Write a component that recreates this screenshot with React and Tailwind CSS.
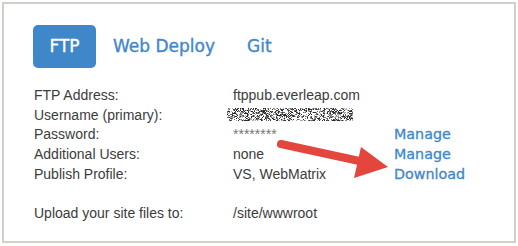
import React from "react";

const rows = [
  { label: "FTP Address:", value: "ftppub.everleap.com" },
  { label: "Username (primary):", value: "noise" },
  { label: "Password:", value: "********", link: "Manage" },
  { label: "Additional Users:", value: "none", link: "Manage" },
  { label: "Publish Profile:", value: "VS, WebMatrix", link: "Download" },
  { label: "", value: "" },
  { label: "Upload your site files to:", value: "/site/wwwroot" },
];

// scrambled block that hides the username
const Noise = () => {
  let seed = 7;
  const rand = () => {
    seed = (seed * 1103515245 + 12345) % 2147483648;
    return seed / 2147483648;
  };
  const cells = [];
  for (let y = 0; y < 13; y++) {
    for (let x = 0; x < 126; x++) {
      const r = rand();
      if (r < 0.55) {
        const shade = r < 0.2 ? "#2a2a2a" : r < 0.38 ? "#666" : "#aaa";
        cells.push(<rect key={x + "-" + y} x={x} y={y} width="1" height="1" fill={shade} />);
      }
    }
  }
  return (
    <svg width="126" height="13" className="inline-block align-middle -ml-[6px] -mt-[3px]">
      {cells}
    </svg>
  );
};

const App = () => {
  return (
    <div className="relative w-[518px] h-[246px] bg-white p-[2px]">
      <div className="h-[241px] w-[514px] border-2 border-[#d3cfca] pl-[29px] pt-[21px]">
        <div className="flex items-center font-['DejaVu_Sans',sans-serif] text-[17px] [-webkit-text-stroke:0.35px]">
          <div className="h-[43px] w-[63px] rounded-[5px] bg-[#3f87c9] text-white flex items-center justify-center">
            FTP
          </div>
          <div className="px-4 text-[#3f87c9] ml-px">Web Deploy</div>
          <div className="px-4 text-[#3f87c9]">Git</div>
        </div>

        <div className="mt-[18px] ml-px grid grid-cols-[199px_161px_auto] leading-[19.7px] text-[14px] text-[#3c3c3c] font-['Liberation_Sans',Arial,sans-serif]">
          {rows.map((row, i) => (
            <React.Fragment key={i}>
              <div className="h-[19.7px]">{row.label}</div>
              <div className="h-[19.7px]">
                {row.value === "noise" ? (
                  <Noise />
                ) : (
                  <span className={row.value.startsWith("*") ? "text-[#777]" : ""}>{row.value}</span>
                )}
              </div>
              <div className="h-[19.7px] text-[14.3px] text-[#3f87c9] font-['DejaVu_Sans',sans-serif] [-webkit-text-stroke:0.3px]">
                {row.link || ""}
              </div>
            </React.Fragment>
          ))}
        </div>
      </div>

      <svg className="absolute inset-0 pointer-events-none" width="518" height="246">
        <line x1="281" y1="144" x2="364" y2="162" stroke="#e2463c" strokeWidth="8" strokeLinecap="round" />
        <polygon points="361,147 388,167 354,178" fill="#e2463c" />
      </svg>
    </div>
  );
};

export default App;
